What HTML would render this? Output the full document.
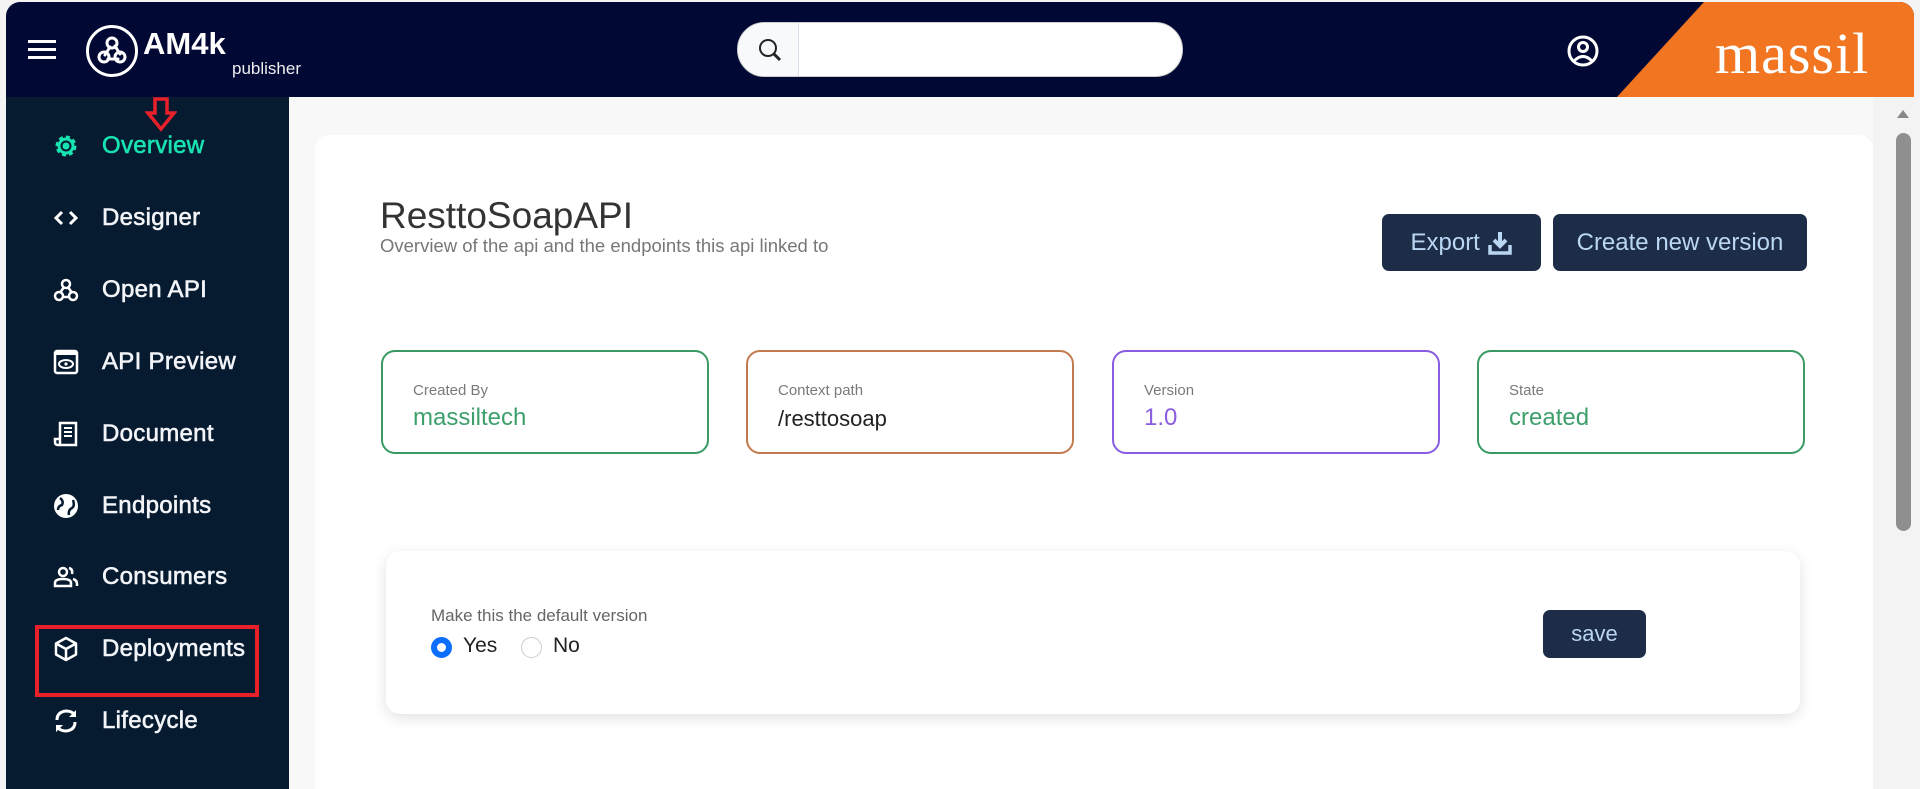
<!DOCTYPE html>
<html style="overflow:hidden;width:1920px;height:789px"><head><meta charset="utf-8"><style>
*{margin:0;padding:0;box-sizing:border-box}
body{width:1920px;height:789px;overflow:hidden;background:#f4f4f4;font-family:"Liberation Sans",sans-serif;position:relative}
.abs{position:absolute}
#hdr{left:6px;top:2px;width:1908px;height:95px;background:#010833;border-radius:14px 14px 0 0;overflow:hidden}
#side{left:6px;top:97px;width:283px;height:692px;background:#061a30}
#main{left:289px;top:97px;width:1625px;height:692px;background:#f8f8f8}
.nav{position:absolute;left:102px;font-size:24px;color:#f2f4f7;letter-spacing:0.3px;-webkit-text-stroke:0.6px currentColor;transform:translateY(-50%)}
.ico{position:absolute;left:52px;width:28px;height:28px;transform:translateY(-50%)}
.card{position:absolute;top:350px;height:104px;width:328px;border:2px solid;border-radius:14px;background:#fff}
.card .l{position:absolute;left:30px;top:30px;font-size:15px;color:#7a7a7a}
.card .v{position:absolute;left:30px;top:52px;font-size:24px}
.btn{position:absolute;background:#1e2d47;color:#b9d6f2;border-radius:7px;font-size:24px;display:flex;align-items:center;justify-content:center}
</style></head><body>
<div id="hdr" class="abs">
  <div class="abs" style="left:22px;top:38px;width:28px;height:3px;background:#fff;box-shadow:0 8px 0 #fff,0 16px 0 #fff"></div>
  <svg class="abs" style="left:79px;top:22px" width="54" height="54" viewBox="0 0 54 54"><circle cx="27" cy="27" r="24.5" fill="none" stroke="#fff" stroke-width="3"/>
  <g fill="none" stroke="#fff" stroke-width="3" stroke-linecap="round"><circle cx="27" cy="19" r="5"/><circle cx="19" cy="33" r="5"/><circle cx="35" cy="33" r="5"/><path d="M25 23 L20 31 M30 22 L35 30 M23 35 H33"/></g></svg>
  <div class="abs" style="left:137px;top:24px;font-size:31px;font-weight:bold;color:#fff">AM4k</div>
  <div class="abs" style="left:226px;top:57px;font-size:17px;color:#eee">publisher</div>
  <div class="abs" style="left:731px;top:20px;width:446px;height:55px;background:#fff;border-radius:28px;overflow:hidden;border:1px solid #ccc">
    <div style="position:absolute;left:0;top:0;width:61px;height:55px;background:#f7f9fb;border-right:1px solid #dde"></div>
    <svg style="position:absolute;left:19px;top:14px" width="26" height="26" viewBox="0 0 26 26"><circle cx="11" cy="11" r="8" fill="none" stroke="#222" stroke-width="2"/><path d="M17 17 L23 23" stroke="#222" stroke-width="3"/></svg>
  </div>
  <svg class="abs" style="left:1560px;top:32px" width="34" height="34" viewBox="0 0 34 34"><circle cx="17" cy="17" r="14" fill="none" stroke="#fff" stroke-width="3"/><circle cx="17" cy="13" r="4.5" fill="none" stroke="#fff" stroke-width="3"/><path d="M8 27 Q17 18 26 27" fill="none" stroke="#fff" stroke-width="3"/></svg>
  <svg class="abs" style="left:1611px;top:0" width="297" height="95"><polygon points="87,0 297,0 297,95 0,95" fill="#f27522"/></svg>
  <div class="abs" style="left:1709px;top:18px;font-family:'Liberation Serif',serif;font-size:58px;color:#fff;letter-spacing:1px">massil</div>
</div>
<div id="side" class="abs"></div>
<div id="main" class="abs"></div>
<div class="abs" style="left:1873px;top:97px;width:41px;height:692px;background:#f3f3f3"></div>
<svg class="abs" style="left:1895px;top:108px" width="16" height="12"><polygon points="8,2 14,10 2,10" fill="#888"/></svg>
<div class="abs" style="left:1896px;top:133px;width:15px;height:398px;background:#8f8f8f;border-radius:8px"></div>

<svg class="abs" style="left:145px;top:97px" width="32" height="36" viewBox="0 0 32 36"><path d="M10 2 H22 V16 H29 L16 32 L3 16 H10 Z" fill="none" stroke="#e8202a" stroke-width="3.5"/></svg>
<svg class="ico" style="top:146px" viewBox="0 0 28 28"><circle cx="14" cy="14" r="9" fill="none" stroke="#19e3b1" stroke-width="3" stroke-dasharray="4 3"/><circle cx="14" cy="14" r="7" fill="none" stroke="#19e3b1" stroke-width="3"/><circle cx="14" cy="14" r="3.5" fill="#19e3b1"/></svg>
<div class="nav" style="top:146px;color:#19e3b1">Overview</div>
<svg class="ico" style="top:218px" viewBox="0 0 28 28"><path d="M10 8 L4 14 L10 20 M18 8 L24 14 L18 20" fill="none" stroke="#fff" stroke-width="3"/></svg>
<div class="nav" style="top:218px">Designer</div>
<svg class="ico" style="top:290px" viewBox="0 0 28 28"><g fill="none" stroke="#fff" stroke-width="2.5"><circle cx="14" cy="8" r="4"/><circle cx="7" cy="20" r="4"/><circle cx="21" cy="20" r="4"/><path d="M12 11 L8 17 M16 11 L20 17 M10 21 H18"/></g></svg>
<div class="nav" style="top:290px">Open API</div>
<svg class="ico" style="top:362px" viewBox="0 0 28 28"><rect x="3" y="3" width="22" height="22" rx="2" fill="none" stroke="#fff" stroke-width="2.5"/><rect x="3" y="3" width="22" height="4" fill="#fff"/><ellipse cx="14" cy="16" rx="7" ry="4" fill="none" stroke="#fff" stroke-width="2"/><circle cx="14" cy="16" r="1.6" fill="#fff"/></svg>
<div class="nav" style="top:362px">API Preview</div>
<svg class="ico" style="top:434px" viewBox="0 0 28 28"><path d="M8 3 H24 V25 H6 Q3 25 3 22 V19 H8 Z M8 19 V25" fill="none" stroke="#fff" stroke-width="2.5"/><path d="M12 8 H20 M12 12 H20 M12 16 H20" stroke="#fff" stroke-width="2"/></svg>
<div class="nav" style="top:434px">Document</div>
<svg class="ico" style="top:506px" viewBox="0 0 28 28"><circle cx="14" cy="14" r="12" fill="#fff"/><path d="M8 6 Q12 9 10 13 Q6 14 6 18 M17 23 Q16 18 20 16 Q23 14 21 8" fill="none" stroke="#061a30" stroke-width="2.5"/></svg>
<div class="nav" style="top:506px">Endpoints</div>
<svg class="ico" style="top:577px" viewBox="0 0 28 28"><g fill="none" stroke="#fff" stroke-width="2.5"><circle cx="11" cy="9" r="4"/><path d="M3 23 V20 Q3 16 11 16 Q19 16 19 20 V23 Z"/><path d="M17 5 Q21 6 20 11 M21 16 Q25 17 25 21 V23"/></g></svg>
<div class="nav" style="top:577px">Consumers</div>
<svg class="ico" style="top:649px" viewBox="0 0 28 28"><path d="M14 3 L24 8.5 V19.5 L14 25 L4 19.5 V8.5 Z M4 8.5 L14 14 L24 8.5 M14 14 V25" fill="none" stroke="#fff" stroke-width="2.5" stroke-linejoin="round"/></svg>
<div class="nav" style="top:649px">Deployments</div>
<div class="abs" style="left:35px;top:625px;width:224px;height:72px;border:4px solid #e8202a"></div>
<svg class="ico" style="top:721px" viewBox="0 0 28 28"><g fill="none" stroke="#fff" stroke-width="3"><path d="M5 13 Q5 5 14 4 Q19 4 22 7"/><path d="M23 15 Q23 23 14 24 Q9 24 6 21"/></g><path d="M24 3 V10 H17 Z M4 25 V18 H11 Z" fill="#fff"/></svg>
<div class="nav" style="top:721px">Lifecycle</div>

<div class="abs" style="left:315px;top:135px;width:1558px;height:654px;background:#fff;border-radius:14px 14px 0 0"></div>
<div class="abs" style="left:380px;top:195px;font-size:37px;color:#333">ResttoSoapAPI</div>
<div class="abs" style="left:380px;top:235px;font-size:18.5px;color:#777">Overview of the api and the endpoints this api linked to</div>
<div class="btn" style="left:1382px;top:214px;width:159px;height:57px">Export&nbsp;<svg width="26" height="26" viewBox="0 0 26 26"><path d="M13 2 V15 M7 10 L13 16 L19 10" fill="none" stroke="#b9d6f2" stroke-width="4"/><path d="M3 15 V23 H23 V15" fill="none" stroke="#b9d6f2" stroke-width="3.5"/></svg></div>
<div class="btn" style="left:1553px;top:214px;width:254px;height:57px">Create new version</div>

<div class="card" style="left:381px;border-color:#3a9a64"><div class="l">Created By</div><div class="v" style="color:#3d9f6a">massiltech</div></div>
<div class="card" style="left:746px;border-color:#c47a4f"><div class="l">Context path</div><div class="v" style="color:#222;font-size:22px;top:54px">/resttosoap</div></div>
<div class="card" style="left:1112px;border-color:#8a5ce0"><div class="l">Version</div><div class="v" style="color:#8a5ce0">1.0</div></div>
<div class="card" style="left:1477px;border-color:#3a9a64"><div class="l">State</div><div class="v" style="color:#3d9f6a">created</div></div>

<div class="abs" style="left:386px;top:551px;width:1414px;height:163px;background:#fff;border-radius:14px;box-shadow:0 4px 14px rgba(0,0,0,0.12)"></div>
<div class="abs" style="left:431px;top:606px;font-size:17px;color:#666">Make this the default version</div>
<div class="abs" style="left:431px;top:637px;width:21px;height:21px;border-radius:50%;border:6px solid #0d6efd;background:#fff"></div>
<div class="abs" style="left:463px;top:634px;font-size:21px;color:#222">Yes</div>
<div class="abs" style="left:521px;top:637px;width:21px;height:21px;border-radius:50%;border:1px solid #ccc;background:#fff"></div>
<div class="abs" style="left:553px;top:634px;font-size:21px;color:#222">No</div>
<div class="btn" style="left:1543px;top:610px;width:103px;height:48px;font-size:22px">save</div>
</body></html>
